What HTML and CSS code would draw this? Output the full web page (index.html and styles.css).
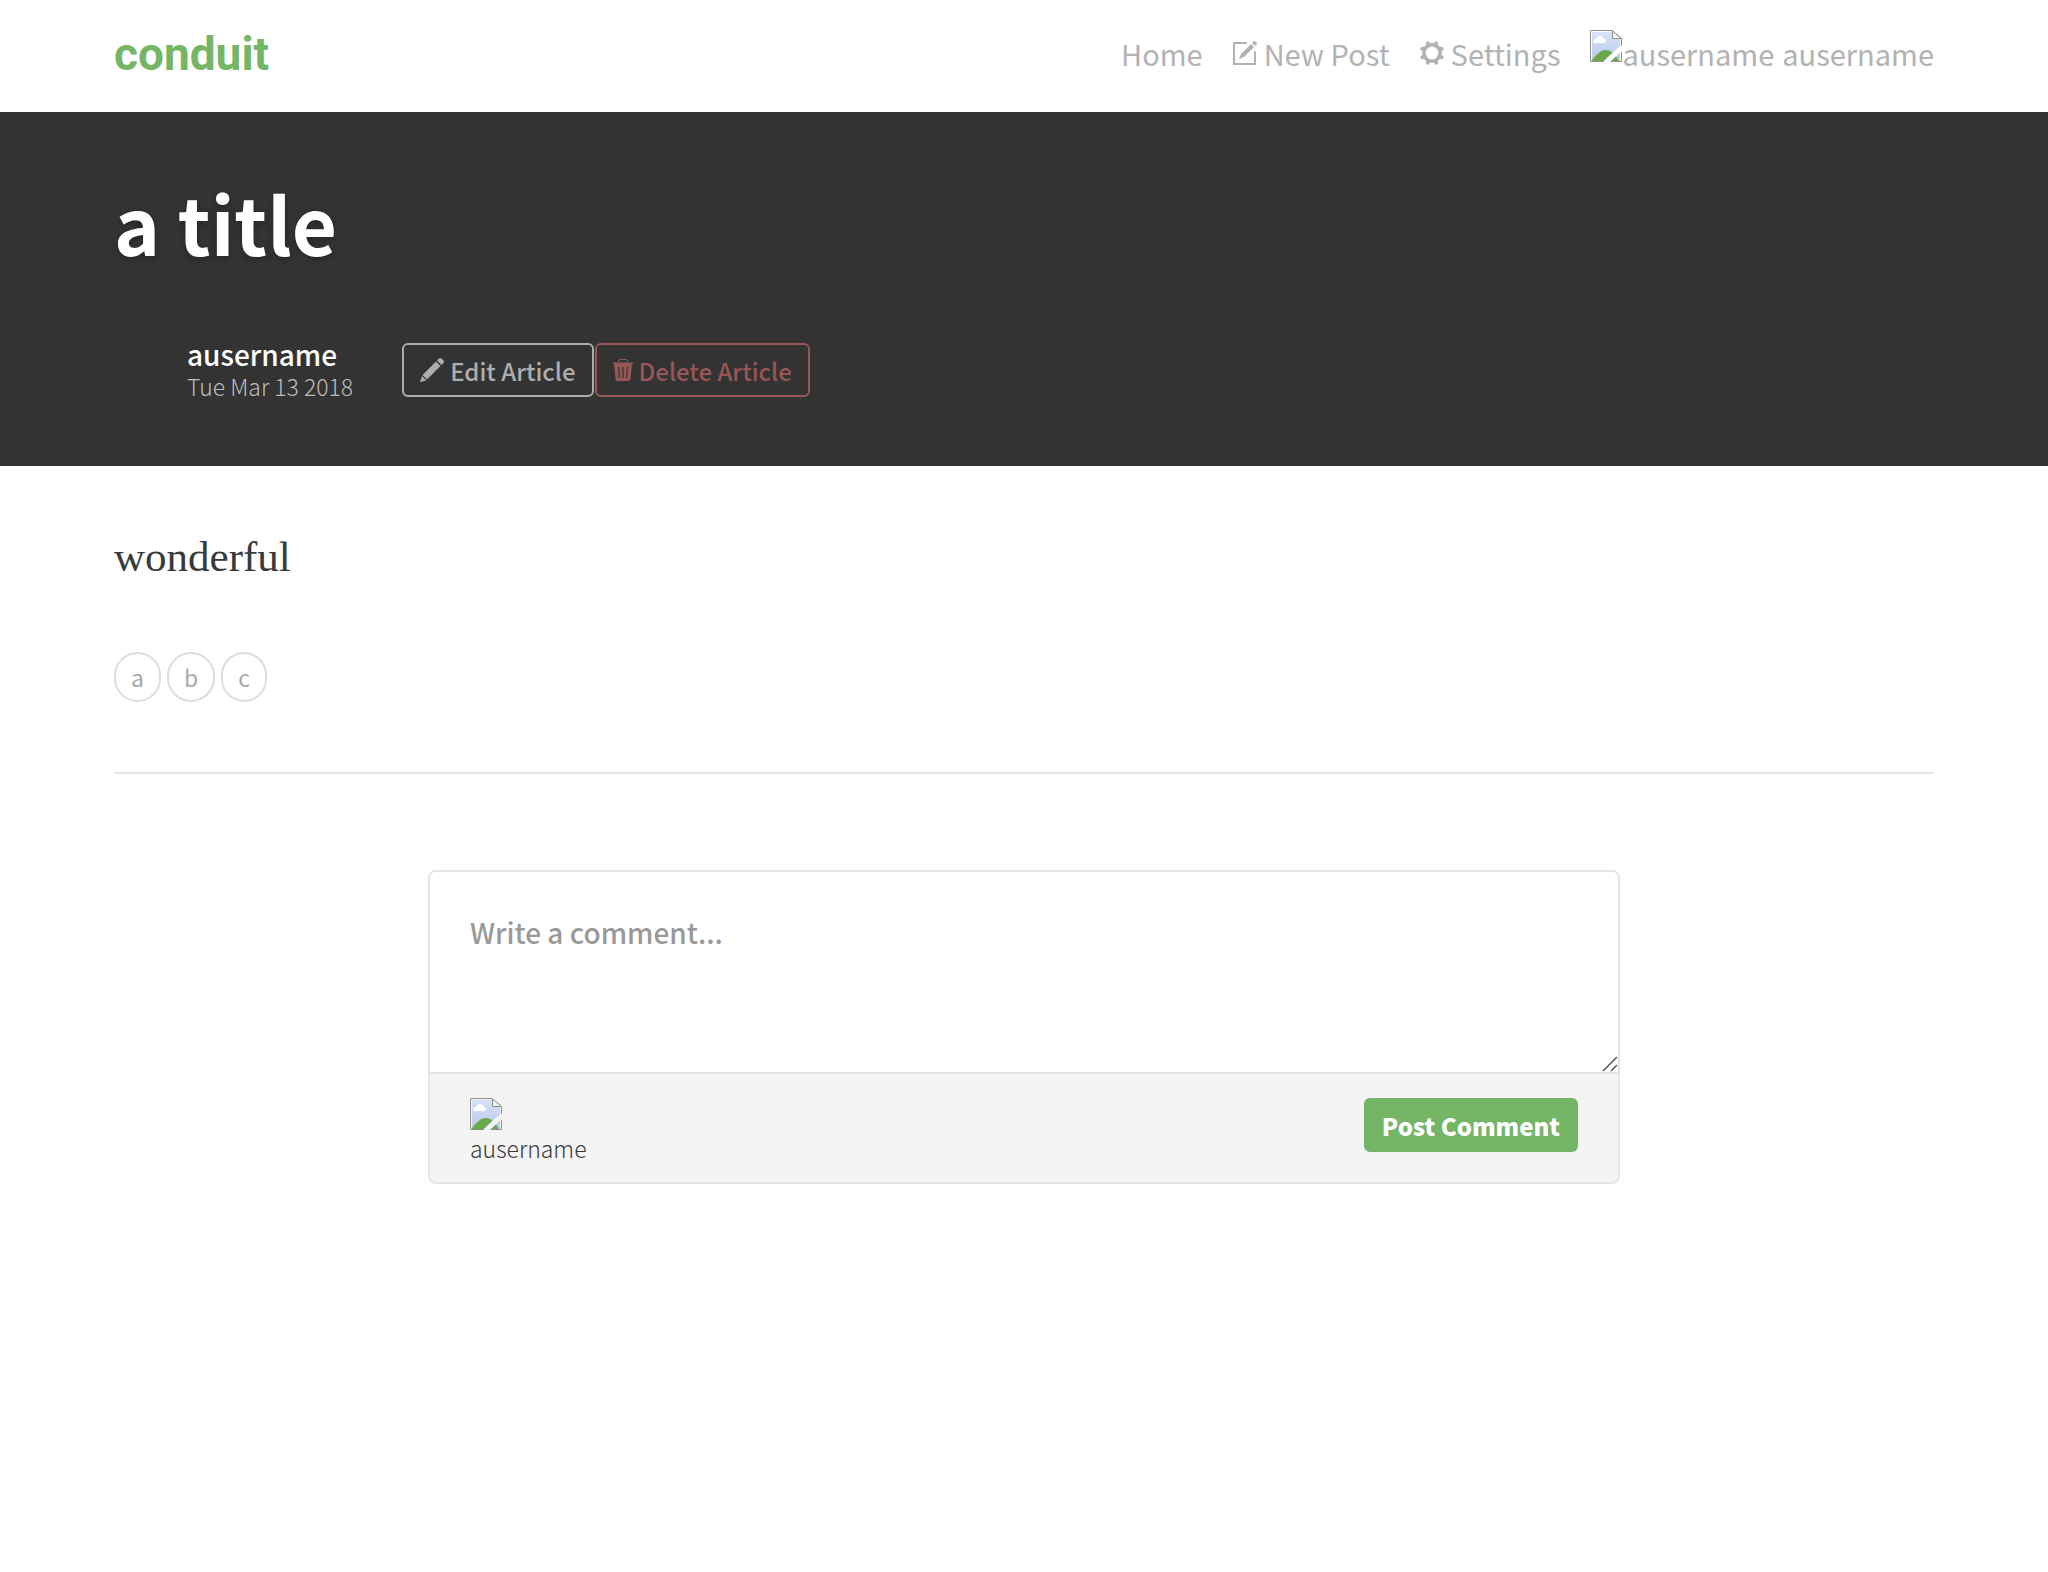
FILE: index.html
```html
<!DOCTYPE html>
<html lang="en">
<head>
<meta charset="utf-8">
<title>Conduit</title>
<meta name="viewport" content="width=device-width, initial-scale=1">
<link rel="stylesheet" href="styles.css">
</head>
<body>
<svg class="defs" aria-hidden="true">
  <defs>
    <linearGradient id="sky" x1="0" y1="0" x2="0" y2="1">
      <stop offset="0" stop-color="#d6e2f8"/>
      <stop offset="1" stop-color="#b9c9ea"/>
    </linearGradient>
    <symbol id="missing" viewBox="0 0 32 32">
      <path d="M2 2h20v7h8v7L14 31H2z" fill="url(#sky)"/>
      <path d="M30 22.500V31h-9z" fill="#bccbeb"/>
      <path d="M5 13c-3 0-2-4 1-4 1-4 7-4 8 0 3 0 3 4 0 4z" fill="#fff"/>
      <path d="M1.500 31C7 23 12 20 16 20q4 0 6.500 2.500L13.500 31zM26 26.500l3 4.500h-8z" fill="#6ba849"/>
      <path d="M.500 31.500V.500H22l9.500 8v7.500M31.500 22v9.500H20.500M.500 31.500H14" fill="none" stroke="#8f8f8f"/>
      <path d="M22.500 1v7.500h9z" fill="#f4f4f4" stroke="#8f8f8f"/>
    </symbol>
    <symbol id="compose" viewBox="0 0 24 24">
      <path d="M14 2H1v21h21V10.500" fill="none" stroke="currentColor" stroke-width="2"/>
      <path d="M6 18l2-5L18 3l3 3-10 10zM19 2l1.500-1.500q1-.700 2 0l1 1q.800 1 0 2L22 5z" fill="currentColor"/>
    </symbol>
    <symbol id="gear" viewBox="0 0 24 24">
      <circle cx="12" cy="12" r="8.200" fill="none" stroke="currentColor" stroke-width="3.600"/>
      <g fill="currentColor">
        <path id="tooth" d="M5.800 5L6 1.200Q7.500 0 8.800.400L11 4z"/>
        <path id="tooth-b" d="M18.200 5L18 1.200Q16.500 0 15.200.400L13 4z"/>
        <use href="#tooth" transform="rotate(90 12 12)"/>
        <use href="#tooth-b" transform="rotate(90 12 12)"/>
        <use href="#tooth" transform="rotate(180 12 12)"/>
        <use href="#tooth-b" transform="rotate(180 12 12)"/>
        <use href="#tooth" transform="rotate(270 12 12)"/>
        <use href="#tooth-b" transform="rotate(270 12 12)"/>
      </g>
    </symbol>
    <symbol id="pencil" viewBox="0 0 24 24">
      <path d="M0 24l2-6 4.500 4.500zM2.500 17L16 3.500 20.500 8 7 21.500zM17 2.500L19 .500q1.200-.800 2.500 0l2 2q.900 1.200 0 2.500l-2 2z" fill="currentColor"/>
    </symbol>
    <symbol id="trash" viewBox="0 0 20 22">
      <path d="M5.500 3.500V2q0-1.500 1.500-1.500h6q1.500 0 1.500 1.500v1.500" fill="none" stroke="currentColor"/>
      <path fill-rule="evenodd" d="M0 3.500h20V5H0zM1 5h18l-1.500 15q-.200 2-2 2h-11q-1.800 0-2-2zM5 8l.800 11h1.200L6.200 8zM9.400 8v11h1.200V8zM13.800 8L13 19h1.200L15 8z" fill="currentColor"/>
    </symbol>
  </defs>
</svg>

<nav class="navbar">
  <div class="container navbar-inner">
    <a class="brand" href="#">conduit</a>
    <ul class="nav-list">
      <li><a class="nav-link" href="#">Home</a></li>
      <li><a class="nav-link" href="#"><svg class="nav-icon"><use href="#compose"/></svg>New Post</a></li>
      <li><a class="nav-link" href="#"><svg class="nav-icon"><use href="#gear"/></svg>Settings</a></li>
      <li><a class="nav-link nav-user" href="#"><svg class="missing"><use href="#missing"/></svg><span>ausername</span><span class="nav-name">ausername</span></a></li>
    </ul>
  </div>
</nav>

<main>
  <header class="banner">
    <div class="container">
      <h1 class="title">a title</h1>
      <div class="meta">
        <div class="info">
          <a class="author" href="#">ausername</a>
          <span class="date">Tue Mar 13 2018</span>
        </div>
        <div class="actions">
          <button class="btn btn-edit" type="button"><svg class="btn-icon"><use href="#pencil"/></svg>Edit Article</button>
          <button class="btn btn-delete" type="button"><svg class="trash-icon"><use href="#trash"/></svg>Delete Article</button>
        </div>
      </div>
    </div>
  </header>

  <div class="container">
    <article class="content">
      <p class="body-text">wonderful</p>
      <ul class="tags">
        <li class="tag">a</li>
        <li class="tag">b</li>
        <li class="tag">c</li>
      </ul>
    </article>
    <hr class="rule">
    <form class="comment">
      <div class="comment-block">
        <textarea class="comment-text" rows="3" placeholder="Write a comment..." aria-label="Write a comment"></textarea>
        <svg class="grip" viewBox="0 0 16 16" aria-hidden="true"><path d="M1 15L15 1M9 15l6-6" fill="none" stroke="#555" stroke-width="1.500"/></svg>
      </div>
      <div class="comment-footer">
        <div class="commenter">
          <svg class="missing"><use href="#missing"/></svg>
          <span class="commenter-name">ausername</span>
        </div>
        <button class="btn btn-post" type="submit">Post Comment</button>
      </div>
    </form>
  </div>
</main>
</body>
</html>
```

FILE: styles.css
```css
* {
  box-sizing: border-box;
}

body {
  margin: 0;
  background: #fff;
  color: #373a3c;
  font-family: "Noto Sans CJK SC", "Noto Sans", sans-serif;
  font-size: 28px;
}

a {
  text-decoration: none;
}

ul {
  margin: 0;
  padding: 0;
  list-style: none;
}

.defs {
  position: absolute;
  width: 0;
  height: 0;
}

.container {
  max-width: 1880px;
  margin: 0 auto;
  padding: 0 30px;
}

.navbar {
  padding: 30px 0 34px;
}

.navbar-inner,
.nav-list {
  display: flex;
  justify-content: space-between;
}

.nav-list {
  gap: 30px;
}

.brand {
  color: #74b566;
  font: 700 46px/48px Roboto, sans-serif;
}

.nav-link {
  display: flex;
  align-items: center;
  gap: 7px;
  color: #b2b2b2;
  font-size: 29px;
  line-height: 46px;
}

.nav-icon {
  width: 24px;
  height: 24px;
}

.nav-user {
  align-items: flex-start;
  gap: 0;
}

.nav-name {
  margin-left: 8px;
}

.missing {
  display: block;
  width: 32px;
  height: 32px;
}

.banner {
  padding: 60px 0 64px;
  background: #333;
  color: #fff;
}

.title {
  margin: 0;
  font-size: 78px;
  font-weight: 700;
  line-height: 100px;
  text-shadow: 0 2px 6px rgba(0, 0, 0, 0.3);
}

.meta {
  display: flex;
  align-items: center;
  gap: 49px;
  margin-top: 66px;
  padding-left: 73px;
}

.info {
  display: flex;
  flex-direction: column;
  line-height: 32px;
}

.author {
  color: #fff;
  font-weight: 500;
}

.date {
  color: #bbb;
  font-size: 23px;
  font-weight: 300;
}

.actions {
  display: flex;
  gap: 1px;
}

.btn {
  display: flex;
  align-items: center;
  gap: 6px;
  height: 54px;
  padding: 0 16px;
  border: 2px solid;
  border-radius: 6px;
  background: transparent;
  font-family: inherit;
  font-size: 24px;
  font-weight: 500;
}

.btn-edit {
  color: #adadad;
}

.btn-delete {
  color: #965756;
}

.btn-icon {
  width: 24px;
  height: 24px;
}

.trash-icon {
  width: 20px;
  height: 22px;
}

.btn-post {
  border-color: #74b566;
  background: #74b566;
  color: #fff;
  font-weight: 900;
}

.content {
  padding: 64px 0;
}

.body-text {
  margin: 0;
  font: 43px/54px "Liberation Serif", serif;
}

.tags {
  display: flex;
  gap: 6px;
  margin-top: 68px;
}

.tag {
  padding: 0 15px;
  border: 2px solid #ddd;
  border-radius: 25px;
  color: #aaa;
  font-size: 23px;
  line-height: 46px;
}

.rule {
  margin: 6px 0 96px;
  border: 0;
  border-top: 2px solid #e5e5e5;
}

.comment {
  max-width: 1192px;
  margin: 0 auto;
  overflow: hidden;
  border: 2px solid #e5e5e5;
  border-radius: 8px;
}

.comment-block {
  position: relative;
}

.comment-text {
  display: block;
  width: 100%;
  height: 200px;
  padding: 40px;
  border: 0;
  outline: 0;
  resize: none;
  color: #55595c;
  font: inherit;
  line-height: 40px;
}

.comment-text::placeholder {
  color: #999;
  font-weight: 500;
}

.grip {
  position: absolute;
  right: 0;
  bottom: 0;
  width: 16px;
  height: 16px;
}

.comment-footer {
  display: flex;
  align-items: flex-start;
  justify-content: space-between;
  padding: 24px 40px 16px;
  border-top: 2px solid #e5e5e5;
  background: #f4f4f4;
}

.commenter-name {
  display: block;
  font-size: 23px;
  font-weight: 300;
  line-height: 36px;
}
```
